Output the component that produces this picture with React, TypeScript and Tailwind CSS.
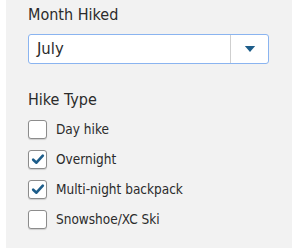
import React, { useState } from "react";

const hikeTypes = [
  { label: "Day hike", checked: false },
  { label: "Overnight", checked: true },
  { label: "Multi-night backpack", checked: true },
  { label: "Snowshoe/XC Ski", checked: false },
];

function CheckMark() {
  return (
    <svg viewBox="0 0 16 16" className="h-[14px] w-[14px]">
      <path d="M2.5 8.8 L6.2 12.2 L13.5 4.2" fill="none" stroke="#1d5d8a" strokeWidth="3" strokeLinecap="round" strokeLinejoin="round" />
    </svg>
  );
}

export default function App() {
  const [checked, setChecked] = useState(hikeTypes.map((h) => h.checked));

  return (
    <div className="w-[300px] h-[248px] bg-white" style={{ fontFamily: "'DejaVu Sans Condensed', 'DejaVu Sans', sans-serif" }}>
      <div className="ml-[6px] w-[286px] h-full bg-[#f2f2f2] px-[22px] text-[#2b2b2b]">
        {/* Month select */}
        <div className="pt-[5px] text-[16px] leading-[20px]">Month Hiked</div>
        <div className="mt-[9px] flex h-[30px] w-[241px] items-center rounded-[3px] border border-[#8ab4f0] bg-white">
          <span className="flex-1 pl-[8px] text-[16.5px]">July</span>
          <div className="flex h-full w-[38px] items-center justify-center border-l border-[#cfcfcf]">
            <svg viewBox="0 0 12 7" className="h-[6px] w-[12px]">
              <path d="M0 0 H12 L6 7 Z" fill="#1d5d8a" />
            </svg>
          </div>
        </div>

        {/* Hike type checkboxes */}
        <div className="mt-[26px] text-[16px] leading-[20px]">Hike Type</div>
        <div className="mt-[10px] flex flex-col gap-[12px]">
          {hikeTypes.map((h, i) => (
            <label key={h.label} className="flex h-[18px] items-center gap-[9px] text-[13.5px]">
              <button
                type="button"
                onClick={() => setChecked((prev) => prev.map((c, j) => (j === i ? !c : c)))}
                className="flex h-[19px] w-[19px] items-center justify-center rounded-[3px] border border-[#8c8c8c] bg-white shadow-[0_1px_1px_rgba(0,0,0,0.15)]"
              >
                {checked[i] && <CheckMark />}
              </button>
              <span>{h.label}</span>
            </label>
          ))}
        </div>
      </div>
    </div>
  );
}
